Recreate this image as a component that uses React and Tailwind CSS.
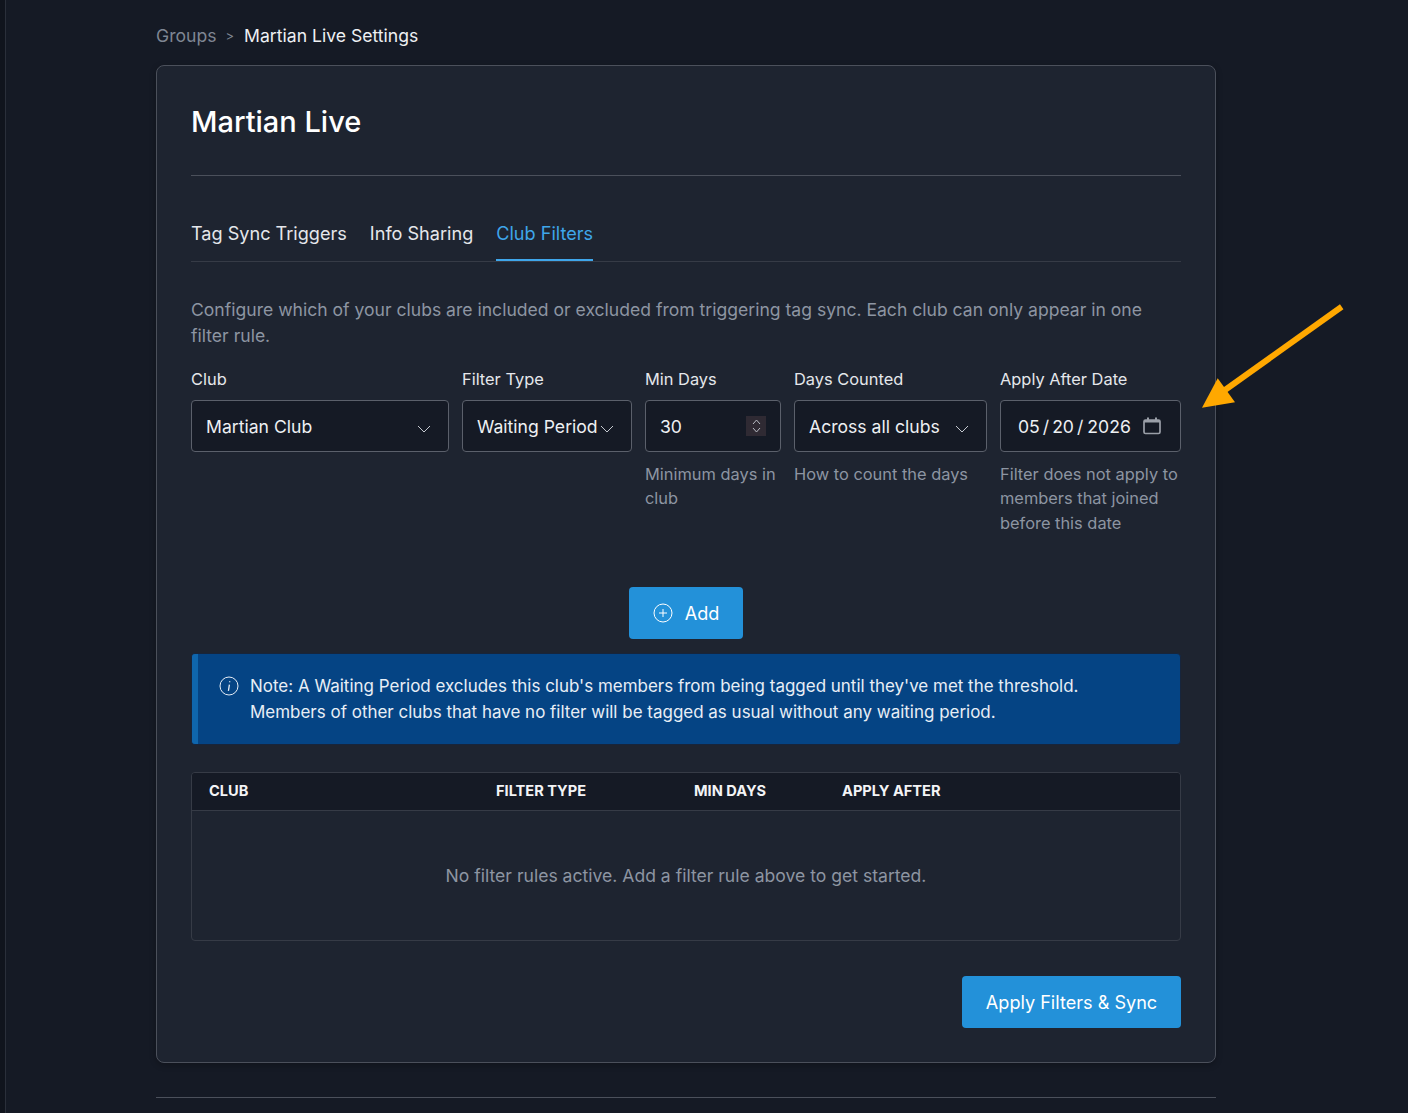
import React from "react";

const Chevron = () => (
  <svg width="14" height="8" viewBox="0 0 14 8" fill="none" stroke="#c5c9d0" strokeWidth="1" className="shrink-0 mt-[3px]">
    <path d="M1 1l6 6 6-6" />
  </svg>
);

const Field = ({ label, w, help, children }) => (
  <div className={w}>
    <div className="text-[16.4px] leading-[24px] text-[#e5e7eb] mb-[9px]">{label}</div>
    {children}
    {help && <div className="mt-[9.7px] text-[16.4px] leading-[24.6px] text-[#8d95a2]">{help}</div>}
  </div>
);

const Select = ({ value }) => (
  <div className="h-[52px] bg-[#151a25] border border-[#5b606b] rounded-[4px] pl-[14px] pr-[17px] pt-[2px] flex items-center justify-between text-[17.6px] text-[#eef0f3] whitespace-nowrap">
    <span>{value}</span>
    <Chevron />
  </div>
);

export default function App() {
  return (
    <div className="relative h-[1113px] overflow-hidden bg-[#151a25] font-['Inter',sans-serif]">
      <div className="absolute left-0 top-0 bottom-0 w-[6px] bg-[#10141d] border-r border-[#2a2f3a]" />
      <div className="w-[1060px] ml-[156px] pt-[23px]">
        <div className="flex items-center h-[26px] text-[17.6px] leading-[26px] mb-[16px]">
          <span className="text-[#7f8693]">Groups</span>
          <span className="text-[#7f8693] text-[13px] ml-[9px] mr-[10px]">&gt;</span>
          <span className="text-[#eef0f3]">Martian Live Settings</span>
        </div>
        <div className="h-[998px] bg-[#1e2430] border border-[#4b505b] rounded-[8px] px-[34px] pt-[34px] shadow-[0_2px_6px_rgba(0,0,0,0.25)]">
          <div className="h-[76px] border-b border-[#4b505b]">
            <h1 className="text-[29px] leading-[44px] font-medium text-white">Martian Live</h1>
          </div>
          <div className="flex gap-[23px] h-[86px] items-end border-b border-[#363b46] text-[18.1px]">
            <div className="h-[41px] text-[#e5e7eb]">Tag Sync Triggers</div>
            <div className="h-[41px] text-[#e5e7eb]">Info Sharing</div>
            <div className="h-[41px] text-[#3fa6ea] border-b-2 border-[#3fa6ea]">Club Filters</div>
          </div>
          <p className="mt-[35px] text-[17.57px] leading-[26px] text-[#8d95a2]">
            Configure which of your clubs are included or excluded from triggering tag sync. Each club can only appear in one filter rule.
          </p>
          <div className="mt-[18px] flex gap-[13px] h-[220px]">
            <Field label="Club" w="w-[258px]"><Select value="Martian Club" /></Field>
            <Field label="Filter Type" w="w-[170px]"><Select value="Waiting Period" /></Field>
            <Field label="Min Days" w="w-[136px]" help="Minimum days in club">
              <div className="h-[52px] bg-[#151a25] border border-[#5b606b] rounded-[4px] pl-[14px] pr-[14px] flex items-center justify-between text-[17.6px] text-[#eef0f3]">
                <span className="mt-[2px]">30</span>
                <div className="w-[20px] h-[20px] bg-[#2f2a33] flex items-center justify-center">
                  <svg width="9" height="16" viewBox="0 0 9 16" fill="none" stroke="#b9bcc4" strokeWidth="1">
                    <path d="M1 6l3.5-4L8 6M1 10l3.5 4L8 10" />
                  </svg>
                </div>
              </div>
            </Field>
            <Field label="Days Counted" w="w-[193px]" help="How to count the days"><Select value="Across all clubs" /></Field>
            <Field label="Apply After Date" w="w-[181px]" help="Filter does not apply to members that joined before this date">
              <div className="h-[52px] bg-[#151a25] border border-[#5b606b] rounded-[4px] pl-[17px] pr-[19px] pt-[2px] flex items-center justify-between text-[17.6px] text-[#eef0f3] whitespace-nowrap">
                <span className="flex">
                  <span>05</span><span className="mx-[3px]">/</span><span>20</span><span className="ml-[3px] mr-[4px]">/</span><span>2026</span>
                </span>
                <svg width="18" height="18" viewBox="0 0 18 18" fill="none" stroke="#9a9fa8" strokeWidth="1.7" className="mt-[-3px]">
                  <rect x="1" y="3" width="16" height="13.5" rx="1.5" />
                  <rect x="1" y="3" width="16" height="2.5" fill="#9a9fa8" stroke="none" />
                  <path d="M5 0.5v3M13 0.5v3" strokeWidth="2" />
                </svg>
              </div>
            </Field>
          </div>
          <div className="flex justify-center">
            <button className="w-[114px] h-[52px] pt-[1px] bg-[#2391d9] rounded-[4px] flex items-center justify-center gap-[12px] text-[18.1px] text-white">
              <svg width="20" height="20" viewBox="0 0 20 20" fill="none" stroke="#fff" strokeWidth="1" className="mt-[-1px]">
                <circle cx="10" cy="10" r="9" />
                <path d="M10 6v8M6 10h8" />
              </svg>
              Add
            </button>
          </div>
          <div className="mt-[14px] h-[92px] border border-[#17253c] rounded-[4px] overflow-hidden flex bg-[#054484]">
            <div className="w-[6px] bg-[#0f66ad] shrink-0" />
            <div className="flex-1 pl-[21px] pt-[19px] flex text-[16.98px] leading-[26px] text-[#e8eef6]">
              <svg width="20" height="20" viewBox="0 0 20 20" fill="none" stroke="#e8eef6" strokeWidth="1" className="mt-[3px] mr-[11px] shrink-0">
                <circle cx="10" cy="10" r="9" />
                <path d="M10.7 5.2v1.1M10.4 8.6l-1 6.2" strokeWidth="1.3" />
              </svg>
              <div>
                Note: A Waiting Period excludes this club's members from being tagged until they've met the threshold.<br />
                Members of other clubs that have no filter will be tagged as usual without any waiting period.
              </div>
            </div>
          </div>
          <div className="mt-[27px] h-[169px] border border-[#363b46] rounded-[4px] overflow-hidden">
            <div className="h-[38px] bg-[#151a25] border-b border-[#363b46] flex items-center text-[14.6px] font-bold text-[#f3f4f6]">
              <div className="w-[304px] pl-[17px]">CLUB</div>
              <div className="w-[198px]">FILTER TYPE</div>
              <div className="w-[148px]">MIN DAYS</div>
              <div>APPLY AFTER</div>
            </div>
            <div className="h-[129px] pt-[2px] flex items-center justify-center text-[17.57px] text-[#8d95a2]">
              No filter rules active. Add a filter rule above to get started.
            </div>
          </div>
          <div className="mt-[35px] flex justify-end">
            <button className="w-[219px] h-[52px] pt-[2px] bg-[#2391d9] rounded-[4px] text-[18.1px] text-white">Apply Filters &amp; Sync</button>
          </div>
        </div>
        <div className="mt-[34px] border-t border-[#4b505b]" />
      </div>
      <svg className="absolute left-[1200px] top-[302px]" width="146" height="110" viewBox="0 0 146 110">
        <path d="M141.7 4.7L25 88" stroke="#ffa800" strokeWidth="6" fill="none" />
        <path d="M2 105.7L17.7 76.3L35 100.3Z" fill="#ffa800" />
      </svg>
    </div>
  );
}
